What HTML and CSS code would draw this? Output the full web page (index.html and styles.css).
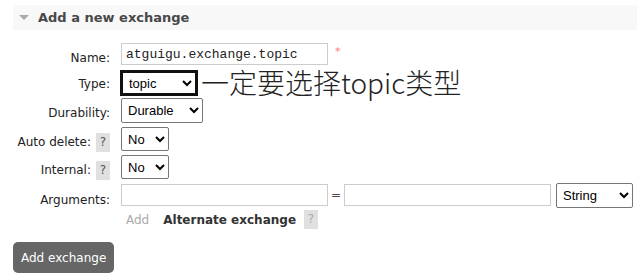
FILE: index.html
```html
<!DOCTYPE html>
<html lang="en">
<head>
    <meta charset="UTF-8">
    <title>Add a new exchange</title>
    <link rel="stylesheet" href="styles.css">
</head>
<body>
    <div class="section">
        <h2 class="section-title"><span class="toggle"></span>Add a new exchange</h2>

        <form class="exchange-form">
            <label class="label">Name:</label>
            <div class="field">
                <input class="text-input" type="text" value="atguigu.exchange.topic">
                <span class="mand">*</span>
            </div>

            <label class="label">Type:</label>
            <div class="field">
                <select class="select select-focus select-type">
                    <option>topic</option>
                </select>
                <span class="note">一定要选择topic类型</span>
            </div>

            <label class="label">Durability:</label>
            <div class="field">
                <select class="select select-durable">
                    <option>Durable</option>
                </select>
            </div>

            <label class="label">Auto delete: <span class="help">?</span></label>
            <div class="field">
                <select class="select select-small">
                    <option>No</option>
                </select>
            </div>

            <label class="label">Internal: <span class="help">?</span></label>
            <div class="field">
                <select class="select select-small">
                    <option>No</option>
                </select>
            </div>

            <label class="label label-args">Arguments:</label>
            <div class="field">
                <input class="text-input" type="text">
                <span class="equals">=</span>
                <input class="text-input" type="text">
                <select class="select select-string">
                    <option>String</option>
                </select>
            </div>

            <span></span>
            <div class="field add-row">
                <span class="add-link">Add</span>
                <span class="alt">Alternate exchange</span>
                <span class="help help-faded">?</span>
            </div>
        </form>

        <button class="btn" type="button">Add exchange</button>
    </div>
</body>
</html>
```

FILE: styles.css
```css
* {
    box-sizing: border-box;
}

body {
    margin: 0;
    padding: 5px 0 0 13px;
    font-family: Verdana, "DejaVu Sans", sans-serif;
    font-size: 12px;
    color: #484848;
    background: white;
}

.section-title {
    margin: 0;
    height: 25px;
    display: flex;
    align-items: center;
    padding-left: 6px;
    background: #f8f8f8;
    font-size: 13px;
    font-weight: bold;
    color: #484848;
}

.toggle {
    width: 0;
    height: 0;
    border-left: 5px solid transparent;
    border-right: 5px solid transparent;
    border-top: 5px solid #aaa;
    margin-right: 9px;
}

.exchange-form {
    display: grid;
    grid-template-columns: 97px auto;
    grid-template-rows: 26px 29px 29px 28px 29px 26px 22px;
    column-gap: 11px;
    margin-top: 13px;
}

.label {
    display: flex;
    align-items: center;
    justify-content: flex-end;
    height: 22px;
    margin-top: 4px;
    color: #222;
}

.label-args {
    margin-top: 5px;
}

.field {
    display: flex;
    align-items: flex-start;
}

.text-input {
    width: 207px;
    height: 22px;
    border: 1px solid #ccc;
    padding: 0 4px;
    font-family: "Liberation Mono", "Courier New", monospace;
    font-size: 13px;
    color: #222;
}

.mand {
    color: #f77;
    font-size: 11px;
    margin: 2px 0 0 7px;
}

.select {
    height: 24px;
    border: 1px solid #767676;
    border-radius: 2px;
    background: white;
    font-family: "Liberation Sans", Arial, sans-serif;
    font-size: 13px;
    color: #000;
    padding: 0 2px;
}

.select-focus {
    margin-top: 2px;
    border: 2px solid #111;
    border-radius: 0;
    outline: 1px solid #111;
}

.select-type {
    width: 76px;
}

.select-durable {
    width: 82px;
    height: 25px;
}

.select-small {
    width: 48px;
}

.select-string {
    width: 77px;
    height: 25px;
    margin-left: 5px;
    margin-top: -1px;
}

.note {
    font-family: "Noto Sans CJK SC", sans-serif;
    font-weight: 300;
    font-size: 28px;
    line-height: 28px;
    color: #222;
    margin-left: 4px;
    margin-top: -1px;
}

.help {
    display: inline-block;
    width: 14px;
    height: 19px;
    line-height: 19px;
    margin-left: 5px;
    text-align: center;
    background: #e0e0e0;
    color: #555;
}

.help-faded {
    color: #aaa;
    margin-left: 8px;
}

.equals {
    width: 16px;
    text-align: center;
    line-height: 22px;
}

.add-row {
    align-items: center;
    height: 19px;
}

.add-link {
    color: #aaa;
    margin-left: 5px;
}

.alt {
    font-weight: bold;
    color: #333;
    margin-left: 14px;
}

.btn {
    margin-top: 10px;
    height: 31px;
    padding: 0 8px;
    background: #666;
    color: white;
    border: none;
    border-radius: 5px;
    font-family: Verdana, "DejaVu Sans", sans-serif;
    font-size: 12px;
}
```
